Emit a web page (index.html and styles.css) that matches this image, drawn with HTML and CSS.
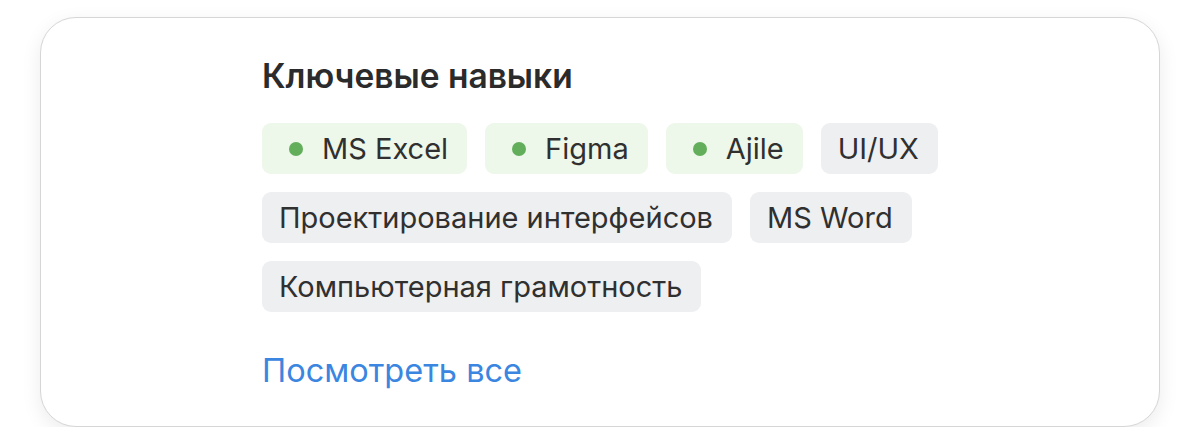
FILE: index.html
```html
<!DOCTYPE html>
<html lang="ru">
<head>
    <meta charset="UTF-8">
    <meta name="viewport" content="width=device-width, initial-scale=1.0">
    <title>Ключевые навыки</title>
    <link rel="stylesheet" href="styles.css">
</head>
<body>
    <div class="card">
        <h2 class="title">Ключевые навыки</h2>

        <div class="skills">
            <span class="chip chip-match"><span class="dot"></span>MS Excel</span>
            <span class="chip chip-match"><span class="dot"></span>Figma</span>
            <span class="chip chip-match"><span class="dot"></span>Ajile</span>
            <span class="chip">UI/UX</span>
            <span class="chip">Проектирование интерфейсов</span>
            <span class="chip">MS Word</span>
            <span class="chip">Компьютерная грамотность</span>
        </div>

        <a class="more-link" href="#">Посмотреть все</a>
    </div>
</body>
</html>
```

FILE: styles.css
```css
body { margin: 0; padding: 17px 40px 0; background: #fff; font-family: Inter, "Noto Sans", sans-serif; }
.card { box-sizing: border-box; width: 1120px; height: 410px; padding: 38px 0 0 221px; background: #fff; border: 1px solid #d6d6d6; border-radius: 36px; box-shadow: 0 6px 20px rgba(0, 0, 0, 0.08); }
.title { margin: 0 0 27px; font-size: 33.5px; line-height: 40px; font-weight: 600; color: #2b2b2b; }
.skills { display: flex; flex-wrap: wrap; gap: 18px; width: 700px; }
.chip { display: inline-flex; align-items: center; height: 51px; padding: 0 19px 0 17px; border-radius: 9px; background: #eeeff1; color: #303030; font-size: 29px; line-height: 51px; }
.chip-match { padding-left: 27px; background: #edf7ea; }
.dot { width: 14px; height: 14px; margin-right: 19px; border-radius: 50%; background: #62ae5b; }
.more-link { display: inline-block; margin-top: 39px; font-size: 32.5px; line-height: 40px; color: #3a86e0; text-decoration: none; }
.more-link:hover { text-decoration: underline; }
```
